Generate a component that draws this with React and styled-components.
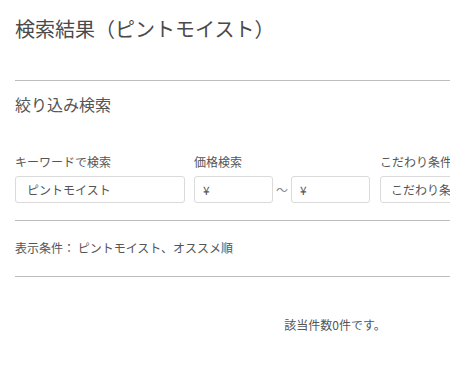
import React from "react";
import styled, { createGlobalStyle } from "styled-components";

const Global = createGlobalStyle`
  html, body { margin: 0; padding: 0; background: #fff; overflow: hidden; }
  body { font-family: "Noto Sans CJK JP", "Noto Sans", sans-serif; color: #555; }
`;

const Page = styled.div`
  width: 640px;
  padding: 14px 0 0 15px;
`;

const Title = styled.h1`
  margin: 0;
  font-size: 20px;
  font-weight: 400;
  line-height: 30px;
  color: #4a4a4a;
`;

const Rule = styled.hr`
  border: 0;
  border-top: 1px solid #bdbdbd;
  margin: ${(p) => p.$m || "0"};
  height: 0;
`;

const SubTitle = styled.h2`
  margin: 0;
  font-size: 16px;
  font-weight: 400;
  line-height: 24px;
  color: #555;
`;

const FilterRow = styled.div`
  display: flex;
  gap: 9px;
  margin-top: 37px;
`;

const Field = styled.div`
  display: flex;
  flex-direction: column;
  gap: 5px;
`;

const Label = styled.label`
  font-size: 12px;
  line-height: 18px;
  color: #555;
  white-space: nowrap;
`;

const Input = styled.input`
  box-sizing: border-box;
  width: ${(p) => p.$w}px;
  height: 27px;
  border: 1px solid #dadada;
  border-radius: 3px;
  padding: 0 ${(p) => p.$pad || 8}px;
  font-family: inherit;
  font-size: 12px;
  color: #555;
  background: #fff;
  outline: none;
  &::placeholder { color: #555; }
`;

const PriceRow = styled.div`
  display: flex;
  align-items: center;
  gap: 3px;
  margin-right: 1px;
`;

const Tilde = styled.span`
  font-size: 12px;
  color: #888;
  width: 12px;
  text-align: center;
`;

const Conditions = styled.p`
  margin: 0;
  padding: 18px 0 19px;
  font-size: 12px;
  line-height: 18px;
  color: #555;
`;

const Result = styled.p`
  margin: 0;
  padding-top: 39px;
  font-size: 12px;
  line-height: 18px;
  text-align: center;
  color: #555;
`;

export default function App() {
  return (
    <>
      <Global />
      <Page>
        <Title>検索結果（ピントモイスト）</Title>
        <Rule $m="36px 0 11px" />
        <SubTitle>絞り込み検索</SubTitle>
        <FilterRow>
          <Field>
            <Label>キーワードで検索</Label>
            <Input $w={170} $pad={11} defaultValue="ピントモイスト" />
          </Field>
          <Field>
            <Label>価格検索</Label>
            <PriceRow>
              <Input $w={79} defaultValue="¥" />
              <Tilde>〜</Tilde>
              <Input $w={79} defaultValue="¥" />
            </PriceRow>
          </Field>
          <Field>
            <Label>こだわり条件を選択</Label>
            <Input $w={170} $pad={10} placeholder="こだわり条件を選択" />
          </Field>
        </FilterRow>
        <Rule $m="17px 0 0" />
        <Conditions>表示条件： ピントモイスト、オススメ順</Conditions>
        <Rule />
        <Result>該当件数0件です。</Result>
      </Page>
    </>
  );
}
